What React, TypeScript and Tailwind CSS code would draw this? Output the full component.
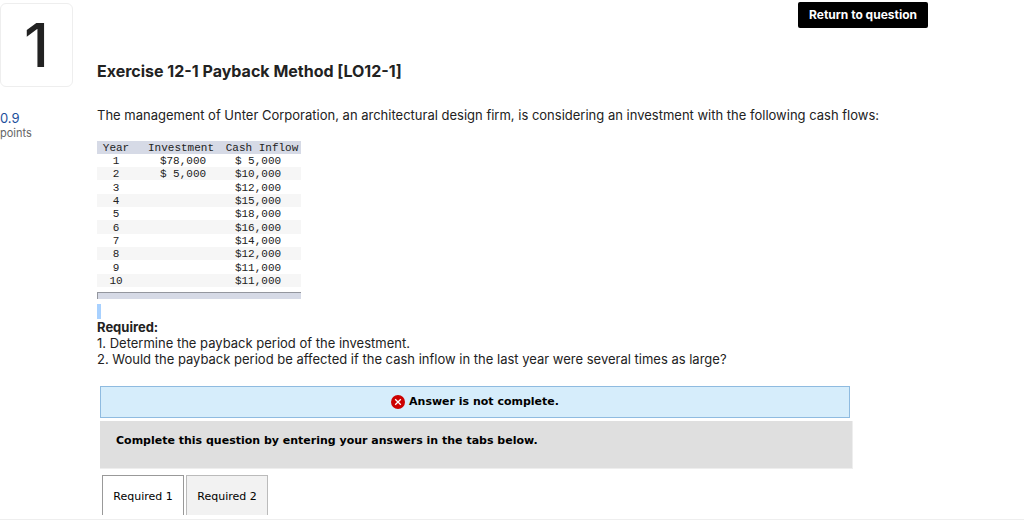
import { useState } from "react";

interface CashFlow {
    year: number;
    investment?: string;
    inflow: string;
}

const cashFlows: CashFlow[] = [
    { year: 1, investment: "$78,000", inflow: "$ 5,000" },
    { year: 2, investment: "$ 5,000", inflow: "$10,000" },
    { year: 3, inflow: "$12,000" },
    { year: 4, inflow: "$15,000" },
    { year: 5, inflow: "$18,000" },
    { year: 6, inflow: "$16,000" },
    { year: 7, inflow: "$14,000" },
    { year: 8, inflow: "$12,000" },
    { year: 9, inflow: "$11,000" },
    { year: 10, inflow: "$11,000" },
];

const tabs = ["Required 1", "Required 2"];

function QuestionSidebar() {
    return (
        <aside className="w-[73px] shrink-0 pt-[3px]">
            <div className="flex h-[84px] items-center justify-center rounded-md border border-[#eeeeee] font-['Inter',sans-serif] text-[60px] leading-none font-medium text-[#222222]">
                1
            </div>
            <p className="mt-[23px] text-[13px] leading-4 text-[#1c4f9c]">0.9</p>
            <p className="text-[11px] leading-[14px] text-[#666666]">points</p>
        </aside>
    );
}

function CashFlowTable() {
    return (
        <table className="w-[204px] table-fixed border-collapse text-center font-['Liberation_Mono',monospace] text-[11px] leading-3 whitespace-pre text-[#222222]">
            <thead className="bg-[#d6dae6]">
                <tr className="h-[13px]">
                    <th className="w-[38px] p-0 pt-px font-normal">Year</th>
                    <th className="w-[88px] p-0 pt-px pl-1 font-normal">
                        Investment
                    </th>
                    <th className="p-0 pt-px font-normal">Cash Inflow</th>
                </tr>
            </thead>
            <tbody>
                {cashFlows.map((row) => (
                    <tr
                        key={row.year}
                        className="h-[13px] even:bg-[#f6f6f6] nth-[3n]:h-[14px]"
                    >
                        <td className="p-0 pt-px">{row.year}</td>
                        <td className="p-0 pt-px pl-2">{row.investment}</td>
                        <td className="p-0 pt-px pr-2">{row.inflow}</td>
                    </tr>
                ))}
            </tbody>
        </table>
    );
}

function AnswerStatus() {
    return (
        <div
            role="status"
            className="flex h-8 items-center justify-center gap-1 border border-[#8fbbe0] bg-[#d6edfb] font-bold"
        >
            <svg className="size-[14px]" viewBox="0 0 14 14" aria-hidden="true">
                <circle cx="7" cy="7" r="7" fill="#cc0000" />
                <path
                    d="M4.2 4.2l5.6 5.6M9.8 4.2l-5.6 5.6"
                    stroke="#ffffff"
                    strokeWidth="1.3"
                />
            </svg>
            <span>Answer is not complete.</span>
        </div>
    );
}

export default function App() {
    const [activeTab, setActiveTab] = useState(tabs[0]);

    return (
        <div className="bg-white font-['Inter',sans-serif] text-[#222222]">
            <div className="flex border-b border-[#eeeeee] pb-1">
                <QuestionSidebar />

                <main className="ml-6 min-w-0 flex-1 pr-24">
                    <div className="flex justify-end pt-0.5">
                        <button
                            type="button"
                            className="h-[26px] rounded-xs bg-black px-[11px] text-[12px] font-bold text-white"
                        >
                            Return to question
                        </button>
                    </div>

                    <h1 className="mt-[31px] text-base leading-6 font-bold">
                        Exercise 12-1 Payback Method [LO12-1]
                    </h1>
                    <p className="mt-6 mb-[18px] text-[13px] leading-4 whitespace-nowrap">
                        The management of Unter Corporation, an architectural
                        design firm, is considering an investment with the
                        following cash flows:
                    </p>

                    <CashFlowTable />
                    <div className="mt-[5px] h-[7px] w-[204px] border-t border-l border-[#94979f] bg-[#d6dae6]" />

                    <div className="mt-[5px] h-[15px] w-1 bg-[#a8d1ff]" />
                    <div className="text-[13px] leading-4">
                        <h2 className="font-bold">Required:</h2>
                        <p>1. Determine the payback period of the investment.</p>
                        <p>
                            2. Would the payback period be affected if the cash
                            inflow in the last year were several times as large?
                        </p>
                    </div>

                    <section className="mt-[19px] mr-[75px] ml-[3px] font-['DejaVu_Sans',Verdana,sans-serif] text-[11px] text-black">
                        <div className="mr-[3px]">
                            <AnswerStatus />
                        </div>
                        <div className="mt-[3px] h-12 border-r border-b border-[#eeeeee] bg-[#dfdfdf] px-4 pt-3 font-bold">
                            Complete this question by entering your answers in
                            the tabs below.
                        </div>
                        <div role="tablist" className="mt-1.5 ml-0.5 flex gap-0.5">
                            {tabs.map((tab) => (
                                <button
                                    key={tab}
                                    type="button"
                                    role="tab"
                                    aria-selected={activeTab === tab}
                                    onClick={() => setActiveTab(tab)}
                                    className="h-10 w-[82px] border border-b-0 border-[#bbbbbb] bg-[#f2f2f2] pt-1 aria-selected:border-[#999999] aria-selected:bg-white"
                                >
                                    {tab}
                                </button>
                            ))}
                        </div>
                    </section>
                </main>
            </div>
        </div>
    );
}
